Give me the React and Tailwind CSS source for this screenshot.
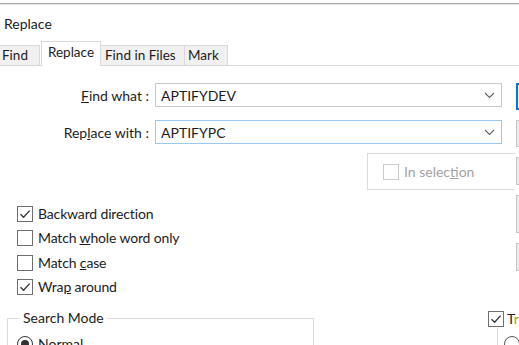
// App.jsx
function Box({ checked, disabled }) {
  return (
    <span
      className={
        "w-4 h-4 border bg-white flex items-center justify-center shrink-0 " +
        (disabled ? "border-[#cccccc]" : "border-[#6e6e6e]")
      }
    >
      {checked && (
        <svg width="12" height="12" viewBox="0 0 12 12">
          <path d="M1.5 6.2 L4.6 9.3 L10.6 2.6" fill="none" stroke="#333" strokeWidth="1.3" />
        </svg>
      )}
    </span>
  );
}

function Chevron() {
  return (
    <svg width="11" height="7" viewBox="0 0 11 7" className="shrink-0">
      <path d="M1 1 L5.5 5.5 L10 1" fill="none" stroke="#606060" strokeWidth="1.1" />
    </svg>
  );
}

function Combo({ value, focus }) {
  return (
    <div
      className={
        "w-[347px] h-[24px] border bg-white flex items-center pl-[5px] pr-[6px] " +
        (focus ? "border-[#99c8ef]" : "border-[#c9c9c9]")
      }
    >
      <span className="flex-1">{value}</span>
      <Chevron />
    </div>
  );
}

function Option({ checked, h, children }) {
  return (
    <div className={"flex items-start gap-[5px] pl-[17px] " + h}>
      <Box checked={checked} />
      <span className="leading-[16px] tracking-[-0.15px]">{children}</span>
    </div>
  );
}

export default function App() {
  return (
    <div className="w-[519px] h-[345px] overflow-hidden bg-white text-[#1c1c1c] text-[14px] leading-[17px] font-['Lato','Noto_Sans',sans-serif]">
      {/* window edge */}
      <div className="h-[3px]" />
      <div className="h-[2px] border-t border-[#a8a8a8] bg-[#e4e4e4]" />

      {/* title */}
      <div className="h-[36px] pl-[4px] pt-[10px] leading-[18px]">Replace</div>

      {/* tabs */}
      <div className="h-[25px] flex items-end border-b border-[#d9d9d9] text-[13.5px]">
        <div className="w-[40px] h-[20px] bg-[#f0f0f0] border-r border-t border-[#d9d9d9] pl-[2px] leading-[19px]">Find</div>
        <div className="ml-[1px] w-[60px] h-[25px] -mb-px bg-white border border-b-0 border-[#d9d9d9] flex justify-center leading-[21px]">Replace</div>
        <div className="w-[84px] h-[20px] bg-[#f0f0f0] border-t border-r border-[#d9d9d9] pl-[4px] leading-[19px]">Find in Files</div>
        <div className="w-[43px] h-[20px] bg-[#f0f0f0] border-t border-r border-[#d9d9d9] pl-[3px] leading-[19px]">Mark</div>
      </div>

      <div className="flex">
        {/* left part */}
        <div className="w-[515px] shrink-0 flex flex-col">
          <div className="mt-[17px] flex items-center">
            <span className="w-[150px] text-right pr-[1px]">
              <u>F</u>ind what :
            </span>
            <span className="ml-[5px]">
              <Combo value="APTIFYDEV" />
            </span>
          </div>
          <div className="mt-[13px] flex items-center">
            <span className="w-[150px] text-right pr-[1px]">
              Rep<u>l</u>ace with :
            </span>
            <span className="ml-[5px]">
              <Combo value="APTIFYPC" focus />
            </span>
          </div>

          <div className="mt-[9px] ml-[367px] w-[148px] h-[37px] border border-r-0 border-[#dcdcdc] flex items-center gap-[5px] pl-[15px]">
            <Box disabled />
            <span className="text-[#a3a3a3]">
              In selec<u>t</u>ion
            </span>
          </div>

          <div className="mt-[16px] flex flex-col">
            <Option checked h="h-[24px]">Backward direction</Option>
            <Option h="h-[25px]">
              Match <u>w</u>hole word only
            </Option>
            <Option h="h-[24px]">
              Match <u>c</u>ase
            </Option>
            <Option checked h="h-[16px]">
              Wra<u>p</u> around
            </Option>
          </div>

          <div className="mt-[8px] flex items-start">
            <fieldset className="ml-[7px] mt-[7px] w-[307px] h-[60px] shrink-0 border border-[#dcdcdc] pl-[9px]">
              <legend className="ml-[3px] px-[3px] leading-[16px]">Search Mode</legend>
              <div className="mt-[9px] flex items-center gap-[5px]">
                <span className="w-4 h-4 rounded-full border border-[#333] flex items-center justify-center">
                  <span className="w-2 h-2 rounded-full bg-[#333]" />
                </span>
                <span>Normal</span>
              </div>
            </fieldset>
            <div className="ml-[174px] mt-[7px] shrink-0 flex flex-col whitespace-nowrap">
              <div className="flex items-center gap-[3px]">
                <Box checked />
                <span>
                  T<span className="text-[#b8941d]">r</span>ansparency
                </span>
              </div>
              <div className="ml-[9px] mt-[1px] h-[30px] border-l border-[#dcdcdc] pl-[6px] pt-[8px]">
                <span className="block w-4 h-4 rounded-full border border-[#555]" />
              </div>
            </div>
          </div>
        </div>

        {/* right buttons column */}
        <div className="ml-[1px] shrink-0 flex flex-col">
          <div className="mt-[17px] w-[20px] h-[27px] border-2 border-[#0078d7] bg-[#e5f1fb]" />
          <div className="mt-[10px] w-[20px] h-[27px] border border-[#c6c6c6] bg-[#ececec]" />
          <div className="mt-[10px] w-[20px] h-[28px] border border-[#c6c6c6] bg-[#ececec]" />
          <div className="mt-[10px] w-[20px] h-[38px] border border-[#c6c6c6] bg-[#ececec]" />
          <div className="mt-[10px] w-[20px] h-[28px] border border-[#c6c6c6] bg-[#ececec]" />
        </div>
      </div>
    </div>
  );
}
